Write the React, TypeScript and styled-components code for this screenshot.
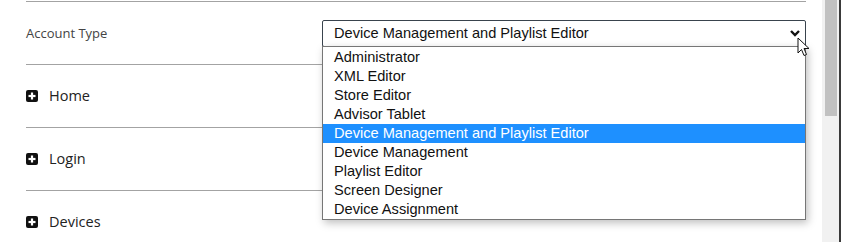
import React, { useState } from 'react';
import styled, { createGlobalStyle } from 'styled-components';

const GlobalStyle = createGlobalStyle`
    html, body {
        margin: 0;
        padding: 0;
        background: #fff;
        overflow: hidden;
    }
`;

const Page = styled.div`
    display: flex;
    flex-direction: row;
    width: 841px;
    height: 242px;
    overflow: hidden;
    position: relative;
`;

const Content = styled.div`
    flex: 1;
    padding: 1px 16px 0 26px;
`;

const Row = styled.div`
    display: flex;
    align-items: center;
    height: 62px;
    border-top: 1px solid #a3a3a3;
`;

const Label = styled.span`
    width: 296px;
    font-family: "Open Sans", sans-serif;
    font-size: 13px;
    color: #444;
`;

const SectionTitle = styled.span`
    display: flex;
    align-items: center;
    gap: 11px;
    margin-top: -1px;
    font-family: "Open Sans", sans-serif;
    font-size: 14.5px;
    color: #222;
`;

const SelectWrap = styled.div`
    position: relative;
    flex: 1;
`;

const SelectBox = styled.div`
    box-sizing: border-box;
    height: 27px;
    border: 1px solid #39434d;
    border-radius: 2px;
    display: flex;
    align-items: center;
    justify-content: space-between;
    padding: 0 4px 0 11px;
    font-family: "Liberation Sans", Arial, sans-serif;
    font-size: 14.6px;
    color: #111;
`;

const Options = styled.ul`
    position: absolute;
    top: 26px;
    left: 0;
    right: 0;
    margin: 0;
    padding: 1px 0 0;
    list-style: none;
    background: #fff;
    border: 1px solid #767676;
    box-shadow: 2px 3px 8px rgba(0, 0, 0, 0.25);
    z-index: 2;
`;

const Option = styled.li<{ $active?: boolean }>`
    height: 19px;
    line-height: 19px;
    padding-left: 11px;
    font-family: "Liberation Sans", Arial, sans-serif;
    font-size: 14.6px;
    color: ${p => (p.$active ? '#fff' : '#111')};
    background: ${p => (p.$active ? '#1e90ff' : 'transparent')};
`;

const Scrollbar = styled.div`
    width: 17px;
    background: #f1f1f1;
    border-right: 2px solid #3a3a3a;
    display: flex;
    justify-content: center;
`;

const Thumb = styled.div`
    width: 12px;
    height: 116px;
    background: #c1c1c1;
`;

const Cursor = styled.svg`
    position: absolute;
    left: 797px;
    top: 37px;
    z-index: 3;
`;

const options = [
    'Administrator',
    'XML Editor',
    'Store Editor',
    'Advisor Tablet',
    'Device Management and Playlist Editor',
    'Device Management',
    'Playlist Editor',
    'Screen Designer',
    'Device Assignment',
];

const sections = ['Home', 'Login', 'Devices'];

const PlusSquare = () => (
    <svg width="12" height="12" viewBox="0 0 12 12">
        <rect x="0" y="0" width="12" height="12" rx="2" fill="#111" />
        <rect x="4.9" y="2.5" width="2.2" height="7" fill="#fff" />
        <rect x="2.5" y="4.9" width="7" height="2.2" fill="#fff" />
    </svg>
);

const Chevron = () => (
    <svg width="12" height="8" viewBox="0 0 12 8">
        <polyline points="2,2 6,6 10,2" fill="none" stroke="#111" strokeWidth="2.4" />
    </svg>
);

const App: React.FC = () => {
    const [selected] = useState('Device Management and Playlist Editor');
    return (
        <Page>
            <GlobalStyle />
            <Content>
                <Row>
                    <Label>Account Type</Label>
                    <SelectWrap>
                        <SelectBox>
                            <span>{selected}</span>
                            <Chevron />
                        </SelectBox>
                        <Options>
                            {options.map(o => (
                                <Option key={o} $active={o === selected}>{o}</Option>
                            ))}
                        </Options>
                    </SelectWrap>
                </Row>
                {sections.map(s => (
                    <Row key={s}>
                        <SectionTitle>
                            <PlusSquare />
                            {s}
                        </SectionTitle>
                    </Row>
                ))}
            </Content>
            <Scrollbar>
                <Thumb />
            </Scrollbar>
            <Cursor width="13" height="20" viewBox="0 0 13 20">
                <path d="M1 1 L1 16 L4.5 12.5 L7 18.5 L9.5 17.5 L7 11.5 L12 11.5 Z" fill="#fff" stroke="#111" strokeWidth="1" strokeLinejoin="round" />
            </Cursor>
        </Page>
    );
};

export default App;
